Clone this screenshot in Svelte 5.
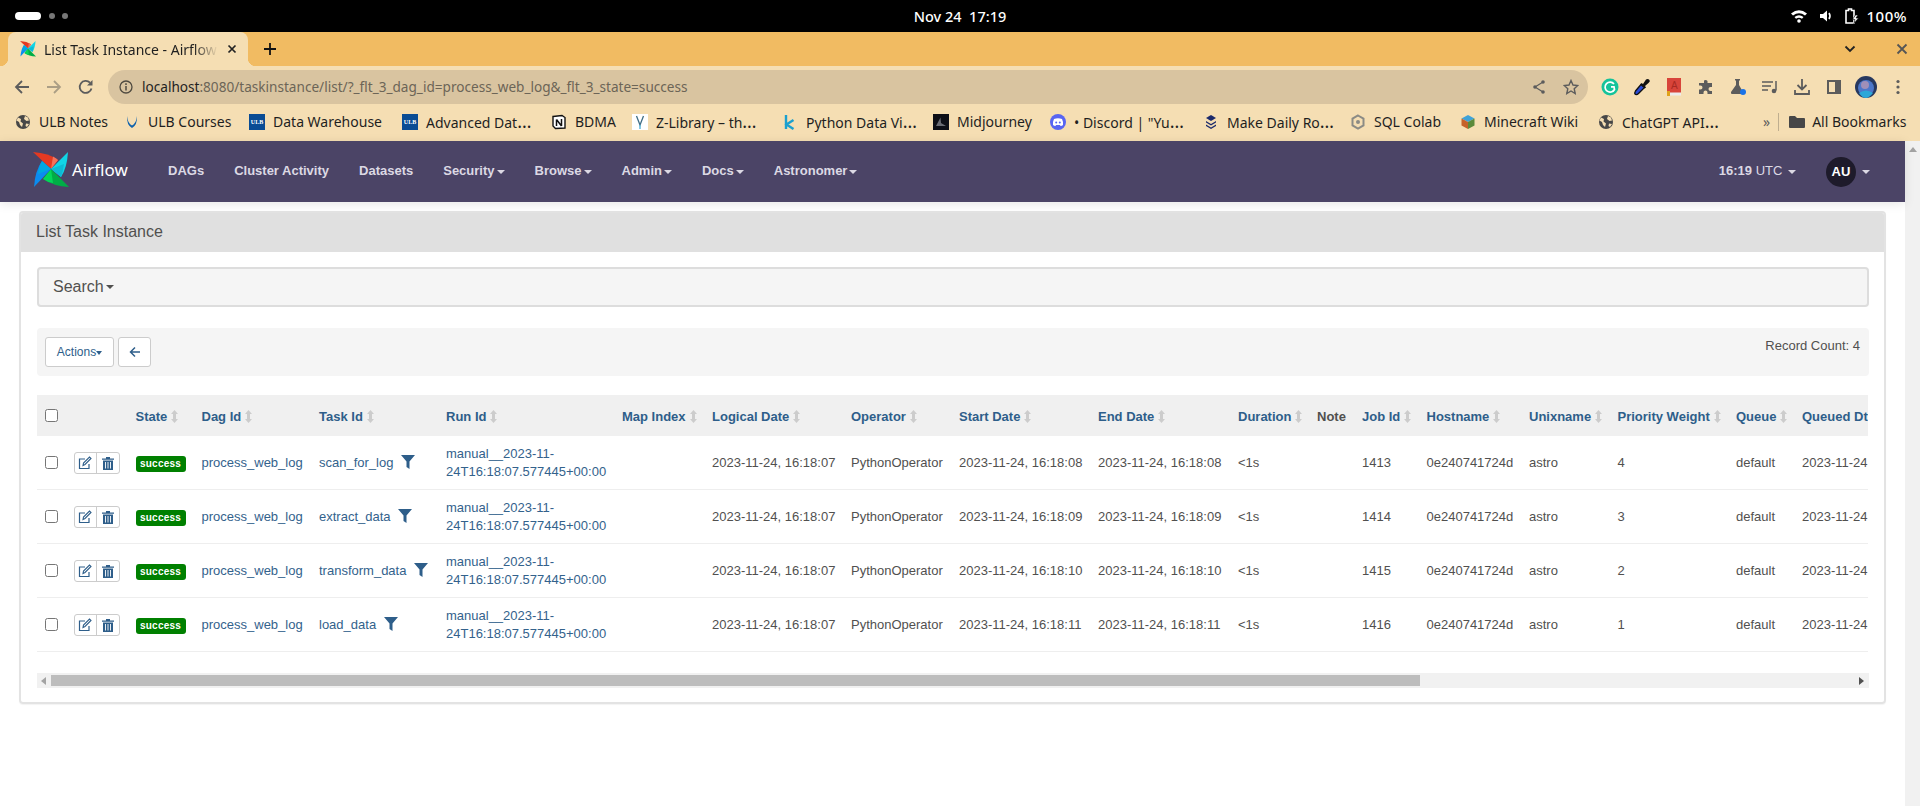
<script lang="ts">
	type Bookmark = { label: string; icon: string; width: number };

	// Widths are icon-to-icon distances, Chrome clips long titles at a fixed size.
	const bookmarks: Bookmark[] = [
		{ label: 'ULB Notes', icon: 'globe', width: 109 },
		{ label: 'ULB Courses', icon: 'ulbc', width: 125 },
		{ label: 'Data Warehouse', icon: 'ulb', width: 153 },
		{ label: 'Advanced Dat…', icon: 'ulb', width: 149 },
		{ label: 'BDMA', icon: 'notion', width: 81 },
		{ label: 'Z-Library – th…', icon: 'zlib', width: 150 },
		{ label: 'Python Data Vi…', icon: 'kaggle', width: 151 },
		{ label: 'Midjourney', icon: 'mj', width: 117 },
		{ label: '• Discord | "Yu…', icon: 'discord', width: 153 },
		{ label: 'Make Daily Ro…', icon: 'stack', width: 147 },
		{ label: 'SQL Colab', icon: 'colab', width: 110 },
		{ label: 'Minecraft Wiki', icon: 'cube', width: 138 },
		{ label: 'ChatGPT API…', icon: 'globe', width: 150 }
	];

	const navItems = [
		{ label: 'DAGs' },
		{ label: 'Cluster Activity' },
		{ label: 'Datasets' },
		{ label: 'Security', menu: true },
		{ label: 'Browse', menu: true },
		{ label: 'Admin', menu: true },
		{ label: 'Docs', menu: true },
		{ label: 'Astronomer', menu: true }
	];

	const columns = [
		{ label: '', width: 29.5 },
		{ label: '', width: 61 },
		{ label: 'State', width: 66, sort: true },
		{ label: 'Dag Id', width: 117.5, sort: true },
		{ label: 'Task Id', width: 127, sort: true },
		{ label: 'Run Id', width: 176, sort: true },
		{ label: 'Map Index', width: 90, sort: true },
		{ label: 'Logical Date', width: 139, sort: true },
		{ label: 'Operator', width: 108, sort: true },
		{ label: 'Start Date', width: 139, sort: true },
		{ label: 'End Date', width: 140, sort: true },
		{ label: 'Duration', width: 79, sort: true },
		{ label: 'Note', width: 45, plain: true },
		{ label: 'Job Id', width: 64.5, sort: true },
		{ label: 'Hostname', width: 102.5, sort: true },
		{ label: 'Unixname', width: 88.5, sort: true },
		{ label: 'Priority Weight', width: 118.5, sort: true },
		{ label: 'Queue', width: 66, sort: true },
		{ label: 'Queued Dttm', width: 160, sort: true }
	];

	const tableWidth = columns.reduce((sum, c) => sum + c.width, 0);

	const rows = [
		{ task: 'scan_for_log', start: '16:18:08', job: 1413, weight: 4 },
		{ task: 'extract_data', start: '16:18:09', job: 1414, weight: 3 },
		{ task: 'transform_data', start: '16:18:10', job: 1415, weight: 2 },
		{ task: 'load_data', start: '16:18:11', job: 1416, weight: 1 }
	];
</script>

{#snippet pinwheel(size: number)}
	<svg class="pinwheel" width={size} height={size} viewBox="0 0 36 36">
		<path d="M0 0 Q16 1 25 8 L18 17 Z" fill="#e43921" />
		<path d="M20 4.500 Q23 6 25 8 L18 17 Z" fill="#f4725b" />
		<path d="M35 0 Q34 16 28 25 L18 17 Z" fill="#11d5e6" />
		<path d="M31 12 Q30 20 28 25 L18 17 Z" fill="#0dbad4" />
		<path d="M36 35 Q20 34 10 27 L18 17 Z" fill="#00ad46" />
		<path d="M20 31 Q14 30 10 27 L18 17 Z" fill="#04d659" />
		<path d="M1 35 Q2 19 9 9 L18 17 Z" fill="#0b8cf0" />
		<path d="M5 22 Q6 14 9 9 L18 17 Z" fill="#00a7e1" />
	</svg>
{/snippet}

{#snippet bookmarkIcon(name: string)}
	{#if name === 'globe'}
		<svg width="16" height="16" viewBox="0 0 16 16"><circle cx="8" cy="8" r="7" fill="#474747" /><path d="M3 3.500 6 5 5.500 7.500 8 9.500 7 13 5 11 4 8 1.500 6.500ZM10 2l3 1.500 1 3-2.500.5L9 5ZM11 9.500l3 .5-2 3-1.500-1Z" fill="#f5deb3" /></svg>
	{:else if name === 'ulbc'}
		<svg width="16" height="16" viewBox="0 0 16 16"><path d="M3 2q-.5 9 5 12 5.500-3 5-12-1 8-5 9.500Q4 10 3 2Z" fill="#0f62ad" /></svg>
	{:else if name === 'ulb'}
		<span class="fav-ulb">ULB</span>
	{:else if name === 'notion'}
		<svg width="16" height="16" viewBox="0 0 16 16"><path d="M2 2.500 11 1.500l3 2V14l-9.500.5L2 12Z" fill="#fff" stroke="#111" stroke-width="1.400" /><path d="M5.500 5.500v6.500M5.500 5.500l5 6.500M10.500 5v7" stroke="#111" stroke-width="1.500" fill="none" /></svg>
	{:else if name === 'zlib'}
		<svg width="16" height="16" viewBox="0 0 16 16"><rect width="16" height="16" fill="#fff" /><path d="M4.500 2 8 11l3.500-9" stroke="#3f6d85" stroke-width="1.300" fill="none" /><path d="M8 11v4" stroke="#54b3d9" stroke-width="1.400" /></svg>
	{:else if name === 'kaggle'}
		<svg width="16" height="16" viewBox="0 0 16 16"><path d="M4 1v14M11.500 6 4.500 10.500 11.500 15" stroke="#1ba0cf" stroke-width="2.400" fill="none" /></svg>
	{:else if name === 'mj'}
		<svg width="16" height="16" viewBox="0 0 16 16"><rect width="16" height="16" fill="#0d0f17" /><path d="M3 12 7.500 3.500 8 9 13 12Z" fill="#6a6c74" /></svg>
	{:else if name === 'discord'}
		<svg width="16" height="16" viewBox="0 0 16 16"><circle cx="8" cy="8" r="8" fill="#5865f2" /><path d="M4 5q4-1.500 8 0 1.500 3 1 6-1 .8-2.500 1L10 11H6l-.5 1Q4 11.800 3 11q-.5-3 1-6Z" fill="#fff" /><circle cx="6.200" cy="8.500" r="1" fill="#5865f2" /><circle cx="9.800" cy="8.500" r="1" fill="#5865f2" /></svg>
	{:else if name === 'stack'}
		<svg width="16" height="16" viewBox="0 0 16 16"><path d="M8 1 13 4 8 7 3 4Z" fill="#1c2a6b" /><path d="M3 7 8 10l5-3v1.500L8 11.500 3 8.500ZM3 10.500 8 13.500l5-3V12L8 15 3 12Z" fill="#1c2a6b" /></svg>
	{:else if name === 'colab'}
		<svg width="16" height="16" viewBox="0 0 16 16"><path d="M8 1.500 13.500 4.700v6.600L8 14.500 2.500 11.300V4.700Z" fill="none" stroke="#8b8b85" stroke-width="2" /><circle cx="8" cy="8" r="2" fill="#8b8b85" /></svg>
	{:else if name === 'cube'}
		<svg width="16" height="16" viewBox="0 0 16 16"><path d="M8 1 14.500 4.500 8 8 1.500 4.500Z" fill="#3fa2d8" /><path d="M1.500 4.500 8 8v7L1.500 11.500Z" fill="#c5622a" /><path d="M14.500 4.500 8 8v7l6.500-3.500Z" fill="#5b8a3a" /></svg>
	{/if}
{/snippet}

{#snippet caret()}
	<span class="caret"></span>
{/snippet}

{#snippet sortIcon()}
	<svg class="sort" width="7" height="13" viewBox="0 0 7 13"><path d="M3.500 0 7 4H5V9H7L3.500 13 0 9H2V4H0Z" fill="#cccccc" /></svg>
{/snippet}

<div class="screen">
	<div class="gnome">
		<div class="activities"><span class="pill"></span><span class="dot"></span><span class="dot"></span></div>
		<div class="clock">Nov 24&nbsp;&nbsp;17:19</div>
		<div class="status">
			<svg width="18" height="14" viewBox="0 0 18 14"><path d="M1 4.500Q9-2 17 4.500L15 6.500Q9 2 3 6.500ZM4.500 8Q9 4.500 13.500 8L12 9.800Q9 7.800 6 9.800Z" fill="#fff" /><circle cx="9" cy="12" r="1.800" fill="#fff" /></svg>
			<svg width="14" height="14" viewBox="0 0 14 14"><path d="M1 5H4L8 1.500V12.500L4 9H1Z" fill="#fff" /><path d="M10 4Q12 7 10 10" stroke="#fff" stroke-width="1.600" fill="none" /></svg>
			<svg width="16" height="16" viewBox="0 0 16 16"><path d="M4.500 1h3v1.500H10V15H2V2.500h2.500Z" fill="none" stroke="#fff" stroke-width="1.600" /><path d="M11.500 7 8.500 11.500H11L10 15.500 14.500 10H12L14 7Z" fill="#fff" stroke="#000" stroke-width=".6" /></svg>
			<span>100%</span>
		</div>
	</div>

	<div class="tabstrip">
		<div class="tab">
			{@render pinwheel(16)}
			<span class="tab-title">List Task Instance - Airflow</span>
			<svg width="10" height="10" viewBox="0 0 10 10"><path d="M1.500 1.500 8.500 8.500M8.500 1.500 1.500 8.500" stroke="#222" stroke-width="1.700" /></svg>
		</div>
		<svg class="newtab" width="14" height="14" viewBox="0 0 14 14"><path d="M7 1V13M1 7H13" stroke="#111" stroke-width="1.800" /></svg>
		<svg class="tabs-menu" width="12" height="8" viewBox="0 0 12 8"><path d="M1.500 1.500 6 6l4.500-4.500" stroke="#222" stroke-width="1.800" fill="none" /></svg>
		<svg class="win-close" width="12" height="12" viewBox="0 0 12 12"><path d="M1.500 1.500 10.500 10.500M10.500 1.500 1.500 10.500" stroke="#555" stroke-width="1.800" /></svg>
	</div>

	<div class="toolbar">
		<svg class="nav-btn" width="16" height="16" viewBox="0 0 16 16"><path d="M15 8H2M8 2 2 8l6 6" stroke="#5c5c5c" stroke-width="1.800" fill="none" /></svg>
		<svg class="nav-btn" width="16" height="16" viewBox="0 0 16 16"><path d="M1 8H14M8 2l6 6-6 6" stroke="#ab9e85" stroke-width="1.800" fill="none" /></svg>
		<svg class="nav-btn" width="16" height="16" viewBox="0 0 16 16"><path d="M13.500 9.500A6 6 0 1 1 12 3.700" stroke="#5c5c5c" stroke-width="1.800" fill="none" /><path d="M14.500 1V6.500H9Z" fill="#5c5c5c" /></svg>
		<div class="omnibox">
			<svg width="14" height="14" viewBox="0 0 14 14"><circle cx="7" cy="7" r="6" fill="none" stroke="#4f4a40" stroke-width="1.300" /><path d="M7 6V10.500M7 3.300V5" stroke="#4f4a40" stroke-width="1.500" /></svg>
			<span class="url"><b>localhost</b>:8080/taskinstance/list/?_flt_3_dag_id=process_web_log&amp;_flt_3_state=success</span>
			<svg class="omni-end" width="14" height="16" viewBox="0 0 14 16"><circle cx="11" cy="3" r="1.800" fill="#5c5c5c" /><circle cx="3" cy="8" r="1.800" fill="#5c5c5c" /><circle cx="11" cy="13" r="1.800" fill="#5c5c5c" /><path d="M11 3 3 8l8 5" stroke="#5c5c5c" stroke-width="1.200" fill="none" /></svg>
			<svg width="16" height="16" viewBox="0 0 16 16"><path d="M8 1.500 10 6l4.800.5-3.600 3.200 1 4.800L8 12l-4.200 2.500 1-4.800L1.200 6.500 6 6Z" fill="none" stroke="#5c5c5c" stroke-width="1.400" /></svg>
		</div>
		<div class="extensions">
			<span class="ext"><svg width="18" height="18" viewBox="0 0 18 18"><circle cx="9" cy="9" r="8.500" fill="#15c39a" /><path d="M13 6A5 5 0 1 0 13.500 11.500L13 8.800H10" stroke="#fff" stroke-width="1.700" fill="none" /></svg></span>
			<span class="ext"><svg width="18" height="18" viewBox="0 0 18 18"><path d="M2.500 16.500Q1 15.500 2.500 13L8 6.500 11.500 9.500 5.500 15.500Q4 17 2.500 16.500Z" fill="#2b4bd6" stroke="#111" stroke-width="1.300" /><path d="M8.500 5 10 6 13 1.500Q15 .5 16.500 2 17.500 3.500 15.500 5L12 8 13 9.500 11.500 10.500 7.500 6.500Z" fill="#111" /></svg></span>
			<span class="ext"><svg width="16" height="18" viewBox="0 0 16 18"><rect x="1" y="0" width="14" height="15" fill="#d8443a" /><path d="M1 14.500H15V17.500H1Z" fill="#ececec" /><path d="M1 13 4 13V18H1Z" fill="#e0a21a" /><text x="5" y="11" font-size="10" fill="#a82a22" font-family="Liberation Sans, sans-serif">A</text></svg></span>
			<span class="ext"><svg width="16" height="16" viewBox="0 0 16 16"><path d="M6 1.500Q8 .5 9.500 2V4H14V8H12.500Q10.500 8 10.500 10T12.500 12H14V15H9.500V13.500Q9.500 11.500 7.500 11.500T5.500 13.500V15H1V10.500H2.500Q4.500 10.500 4.500 8.500T2.500 6.500H1V4H6Z" fill="#5c5c5c" /></svg></span>
			<span class="ext"><svg width="18" height="18" viewBox="0 0 18 18"><path d="M6 1H11V2.500H10V7L14 14Q14.500 16 13 16H3Q1.500 16 2 14L7 7V2.500H6Z" fill="#5c5c5c" /><circle cx="14" cy="14" r="3" fill="#1a73e8" /></svg></span>
			<span class="ext"><svg width="16" height="14" viewBox="0 0 16 14"><path d="M0 2H11M0 6H9M0 10H6" stroke="#5c5c5c" stroke-width="1.500" /><path d="M14 1V10.500" stroke="#5c5c5c" stroke-width="1.500" /><circle cx="12" cy="11" r="2.300" fill="#5c5c5c" /></svg></span>
			<span class="ext"><svg width="18" height="18" viewBox="0 0 18 18"><path d="M9 1V11M4.500 7 9 11.500 13.500 7M2 12V16H16V12" stroke="#5c5c5c" stroke-width="1.800" fill="none" /></svg></span>
			<span class="ext"><svg width="14" height="14" viewBox="0 0 14 14"><rect x="1" y="1" width="12" height="12" fill="none" stroke="#5c5c5c" stroke-width="2" /><rect x="8" y="1" width="5" height="12" fill="#5c5c5c" /></svg></span>
			<span class="ext"><svg width="22" height="22" viewBox="0 0 22 22"><circle cx="11" cy="11" r="11" fill="#27385f" /><circle cx="11" cy="12" r="8" fill="#4d77c9" /><circle cx="10" cy="9" r="4" fill="#a08fb8" /><path d="M4 17Q11 12 18 17 14 22 11 22 7 22 4 17Z" fill="#2ca7d8" /></svg></span>
			<span class="ext"><svg width="4" height="16" viewBox="0 0 4 16"><circle cx="2" cy="2.500" r="1.600" fill="#5c5c5c" /><circle cx="2" cy="8" r="1.600" fill="#5c5c5c" /><circle cx="2" cy="13.500" r="1.600" fill="#5c5c5c" /></svg></span>
		</div>
	</div>

	<div class="bookmarks">
		{#each bookmarks as b}
			<div class="bookmark" style:width="{b.width}px">
				<span class="bm-icon">{@render bookmarkIcon(b.icon)}</span>
				<span>{b.label.replace('…', '')}{#if b.label.endsWith('…')}<span class="ell">…</span>{/if}</span>
			</div>
		{/each}
		<span class="more">»</span>
		<span class="bm-sep"></span>
		<svg width="16" height="14" viewBox="0 0 16 14"><path d="M0 2Q0 1 1 1H6L8 3H15Q16 3 16 4V12Q16 13 15 13H1Q0 13 0 12Z" fill="#474747" /></svg>
		<span class="all-bm">All Bookmarks</span>
	</div>

	<div class="page">
		<main>
			<nav class="navbar">
				<a class="brand" href="#home">
					{@render pinwheel(36)}
					<span>Airflow</span>
				</a>
				<ul class="nav-list">
					{#each navItems as item}
						<li>{item.label}{#if item.menu}{@render caret()}{/if}</li>
					{/each}
				</ul>
				<div class="nav-right">
					<span class="utc"><b>16:19</b> UTC {@render caret()}</span>
					<span class="avatar">AU</span>
					{@render caret()}
				</div>
			</nav>

			<section class="panel">
				<div class="panel-heading">List Task Instance</div>
				<div class="panel-body">
					<div class="search">Search{@render caret()}</div>

					<div class="well">
						<div class="well-actions">
							<button class="btn" type="button">Actions{@render caret()}</button>
							<button class="btn back" type="button" aria-label="Back">
								<svg width="12" height="12" viewBox="0 0 12 12"><path d="M11 6H1.500M6 1.500 1.500 6 6 10.500" stroke="#2e5e8a" stroke-width="1.500" fill="none" /></svg>
							</button>
						</div>
						<span class="count">Record Count: 4</span>
					</div>

					<div class="table-wrap">
						<table style:width="{tableWidth}px">
							<colgroup>
								{#each columns as c}
									<col style:width="{c.width}px" />
								{/each}
							</colgroup>
							<thead>
								<tr>
									<th><input type="checkbox" aria-label="Select all" /></th>
									{#each columns.slice(1) as c}
										<th class:plain={c.plain}>{c.label}{#if c.sort}{@render sortIcon()}{/if}</th>
									{/each}
								</tr>
							</thead>
							<tbody>
								{#each rows as r}
									<tr>
										<td><input type="checkbox" aria-label="Select row" /></td>
										<td>
											<div class="btn-group">
												<span><svg width="14" height="14" viewBox="0 0 14 14"><path d="M11 8V12.500H1.500V3H7" stroke="#2e5e8a" stroke-width="1.200" fill="none" /><path d="M5 9.500 5.500 7 11.500 1 13 2.500 7 8.500Z" stroke="#2e5e8a" stroke-width="1.100" fill="none" /></svg></span>
												<span><svg width="12" height="14" viewBox="0 0 12 14"><path d="M0 2.500H12V3.800H0ZM4 1H8V2.500H4ZM1 4.500H11V14H1Z" fill="#2e5e8a" /><path d="M3.500 6V12.500M6 6V12.500M8.500 6V12.500" stroke="#fff" stroke-width=".9" /></svg></span>
											</div>
										</td>
										<td><span class="badge">success</span></td>
										<td><a href="#dag">process_web_log</a></td>
										<td>
											<a href="#task">{r.task}</a>
											<svg class="funnel" width="14" height="14" viewBox="0 0 14 14"><path d="M0 0H14L8.500 6.500V14L5.500 12V6.500Z" fill="#2e5e8a" /></svg>
										</td>
										<td><a href="#run">manual__2023-11-<br />24T16:18:07.577445+00:00</a></td>
										<td></td>
										<td>2023-11-24, 16:18:07</td>
										<td>PythonOperator</td>
										<td>2023-11-24, {r.start}</td>
										<td>2023-11-24, {r.start}</td>
										<td>&lt;1s</td>
										<td></td>
										<td>{r.job}</td>
										<td>0e240741724d</td>
										<td>astro</td>
										<td>{r.weight}</td>
										<td>default</td>
										<td>2023-11-24, 16:18:07</td>
									</tr>
								{/each}
							</tbody>
						</table>
					</div>

					<div class="hscroll">
						<span class="arrow left"></span>
						<span class="thumb"></span>
						<span class="arrow right"></span>
					</div>
				</div>
			</section>
		</main>
		<aside class="vscroll"><span class="arrow up"></span></aside>
	</div>
</div>

<style>
	:global(body) {
		margin: 0;
		background: #fff;
	}
	.screen {
		height: 806px;
		overflow: hidden;
		display: flex;
		flex-direction: column;
		font-family: 'Liberation Sans', Arial, sans-serif;
		font-size: 13px;
		color: #51504f;
	}
	svg {
		flex: none;
		display: block;
	}

	/* desktop top bar */
	.gnome {
		height: 32px;
		flex: none;
		background: #000;
		color: #fff;
		display: grid;
		grid-template-columns: 1fr auto 1fr;
		align-items: center;
		font-family: 'Noto Sans', sans-serif;
		font-size: 14.500px;
		font-weight: 500;
	}
	.activities {
		display: flex;
		align-items: center;
		gap: 5px;
		padding-left: 15px;
	}
	.pill {
		width: 26px;
		height: 8px;
		border-radius: 4px;
		background: #fff;
		margin-right: 1px;
	}
	.dot {
		width: 6px;
		height: 6px;
		border-radius: 50%;
		background: #777;
		margin-left: 2px;
	}
	.status {
		display: flex;
		justify-content: flex-end;
		align-items: center;
		gap: 11px;
		padding-right: 13px;
	}
	.status span {
		margin-left: -5px;
		font-size: 15px;
		letter-spacing: 0.5px;
	}

	/* browser chrome */
	.tabstrip {
		height: 34px;
		flex: none;
		background: #f1bb62;
		display: flex;
		align-items: center;
		padding-left: 8px;
	}
	.tab {
		width: 240px;
		height: 34px;
		box-sizing: border-box;
		background: #f5deb3;
		border-radius: 8px 8px 0 0;
		display: flex;
		align-items: center;
		gap: 8px;
		padding: 0 11px 0 12px;
		color: #1f1f1f;
		font-family: 'Noto Sans', sans-serif;
		font-size: 14px;
		position: relative;
	}
	/* the flared feet of the active tab */
	.tab::before,
	.tab::after {
		content: '';
		position: absolute;
		bottom: 0;
		width: 8px;
		height: 8px;
	}
	.tab::before {
		left: -8px;
		background: radial-gradient(circle at 0 0, transparent 8px, #f5deb3 8.500px);
	}
	.tab::after {
		right: -8px;
		background: radial-gradient(circle at 100% 0, transparent 8px, #f5deb3 8.500px);
	}
	.tab-title {
		width: 174px;
		flex: none;
		white-space: nowrap;
		overflow: hidden;
		-webkit-mask-image: linear-gradient(to right, #000 86%, transparent);
		mask-image: linear-gradient(to right, #000 86%, transparent);
	}
	.tab svg:last-child {
		margin-left: 1px;
	}
	.newtab {
		margin-left: 15px;
	}
	.tabs-menu {
		margin-left: auto;
		margin-right: 40px;
	}
	.win-close {
		margin-right: 12px;
	}
	.toolbar {
		height: 38px;
		flex: none;
		box-sizing: border-box;
		background: #f5deb3;
		display: flex;
		align-items: center;
		padding: 4px 0 0 14px;
		gap: 16px;
	}
	.omnibox {
		margin-left: -2px;
		width: 1480px;
		height: 34px;
		box-sizing: border-box;
		border-radius: 17px;
		background: #d9c4a0;
		display: flex;
		align-items: center;
		padding: 0 9px 0 11px;
		gap: 17px;
		flex: none;
		color: #6c6557;
		font-family: 'Noto Sans', sans-serif;
		font-size: 13.600px;
	}
	.url {
		flex: 1;
		margin-left: -8px;
		padding-bottom: 2px;
		white-space: nowrap;
	}
	.url b {
		font-weight: 400;
		color: #1f1f1f;
	}
	.extensions {
		display: flex;
		margin-left: -10px;
		flex: none;
	}
	.ext {
		width: 32px;
		height: 32px;
		flex: none;
		display: flex;
		align-items: center;
		justify-content: center;
	}
	.bookmarks {
		height: 37px;
		flex: none;
		box-sizing: border-box;
		padding: 0 0 2px 15px;
		background: #f5deb3;
		display: flex;
		align-items: center;
		font-family: 'Noto Sans', sans-serif;
		font-size: 14px;
		color: #1f1f1f;
		white-space: nowrap;
	}
	.bookmark {
		display: flex;
		align-items: center;
		gap: 8px;
		flex: none;
		box-sizing: border-box;
	}
	.ell {
		font-size: 18px;
		line-height: 1;
	}
	.bm-icon {
		width: 16px;
		height: 16px;
		flex: none;
	}
	.fav-ulb {
		display: block;
		width: 16px;
		height: 16px;
		background: #0a4c94;
		color: #fff;
		font: bold 6px/16px 'Liberation Serif', serif;
		text-align: center;
	}
	.more {
		margin-left: 15px;
		color: #5c5c5c;
		font-size: 14px;
	}
	.bm-sep {
		width: 1px;
		height: 18px;
		background: #bfae8f;
		margin: 0 10px 0 8px;
	}
	.all-bm {
		margin-left: 7px;
	}

	/* page */
	.page {
		flex: 1;
		display: flex;
		min-height: 0;
	}
	main {
		flex: 1;
		min-width: 0;
	}
	.navbar {
		height: 61px;
		background: #4b4466;
		color: #dcd9e4;
		display: flex;
		align-items: center;
		font-weight: bold;
		box-shadow: 0 2px 10px rgba(0, 0, 0, 0.1);
		position: relative;
		padding-left: 33px;
	}
	.brand {
		display: flex;
		align-items: center;
		gap: 3px;
		margin-top: -4px;
		color: #fff;
		text-decoration: none;
		font-family: 'Noto Sans', sans-serif;
		font-weight: 400;
		font-size: 17px;
		width: 135px;
	}
	.nav-list {
		list-style: none;
		display: flex;
		gap: 30px;
		margin: -2px 0 0;
		padding: 0;
	}
	.caret {
		display: inline-block;
		width: 0;
		height: 0;
		margin-left: 2px;
		vertical-align: middle;
		border-top: 4px solid;
		border-left: 4px solid transparent;
		border-right: 4px solid transparent;
	}
	.nav-right {
		margin-left: auto;
		display: flex;
		align-items: center;
		padding-right: 35px;
	}
	.utc {
		font-weight: 400;
		margin: -2px 30px 0 0;
	}
	.utc b {
		font-weight: bold;
	}
	.avatar {
		width: 30px;
		height: 30px;
		border-radius: 50%;
		background: #1e1b2b;
		color: #fff;
		display: flex;
		align-items: center;
		justify-content: center;
		margin-right: 4px;
	}

	.panel {
		margin: 9px 19px 0;
		border: 2px solid #e3e3e3;
		border-radius: 4px;
		box-shadow: 0 1px 1px rgba(0, 0, 0, 0.05);
	}
	.panel-heading {
		height: 39px;
		box-sizing: border-box;
		padding: 0 0 2px 15px;
		background: #e0e0e0;
		border-radius: 2px 2px 0 0;
		display: flex;
		align-items: center;
		font-size: 16px;
	}
	.panel-body {
		padding: 15px 15px 14px 16px;
	}
	.search {
		height: 40px;
		box-sizing: border-box;
		border: 2px solid #ddd;
		border-radius: 4px;
		background: #f5f5f5;
		padding-left: 14px;
		display: flex;
		align-items: center;
		font-size: 16px;
	}
	.well {
		margin-top: 21px;
		height: 48px;
		background: #f5f5f5;
		border-radius: 4px;
		display: flex;
		justify-content: space-between;
		padding: 9px 9px 0 8px;
		box-sizing: border-box;
	}
	.well-actions {
		display: flex;
		gap: 4px;
		align-items: flex-start;
	}
	.btn {
		height: 30px;
		box-sizing: border-box;
		width: 69px;
		border: 1px solid #ccc;
		border-radius: 3px;
		background: #fff;
		color: #2e5e8a;
		font: 12px 'Liberation Sans', Arial, sans-serif;
		padding: 0;
	}
	.btn .caret {
		margin-left: 0;
		border-left-width: 3.500px;
		border-right-width: 3.500px;
	}
	.back {
		width: 33px;
		display: flex;
		align-items: center;
		justify-content: center;
	}
	.count {
		margin-top: 1px;
	}

	.table-wrap {
		margin: 19px 1px 0 0;
		overflow: hidden;
	}
	table {
		border-collapse: separate;
		border-spacing: 0;
		table-layout: fixed;
		line-height: 18px;
	}
	thead tr {
		background: #f0f0f0;
	}
	th {
		height: 41px;
		box-sizing: border-box;
		padding: 2px 8px 0;
		text-align: left;
		color: #2e5e8a;
		white-space: nowrap;
		overflow: hidden;
	}
	th.plain {
		color: #51504f;
	}
	td {
		height: 54px;
		box-sizing: border-box;
		padding: 8px;
		border-bottom: 1px solid #eee;
		white-space: nowrap;
		overflow: hidden;
	}
	input[type='checkbox'] {
		display: block;
		margin: 0;
		width: 13px;
		height: 13px;
	}
	th input[type='checkbox'] {
		margin-top: -3px;
	}
	td a {
		color: #33628c;
		text-decoration: none;
	}
	.sort {
		display: inline-block;
		margin-left: 4px;
		vertical-align: -2px;
	}
	.btn-group {
		display: flex;
		width: 46px;
		height: 22px;
		margin-left: -1px;
		box-sizing: border-box;
		border: 1px solid #ccc;
		border-radius: 3px;
	}
	.btn-group span {
		flex: 1;
		display: flex;
		align-items: center;
		justify-content: center;
	}
	.btn-group span + span {
		border-left: 1px solid #ccc;
	}
	.badge {
		display: inline-block;
		width: 50px;
		height: 16px;
		background: #008000;
		border-radius: 3px;
		color: #fff;
		font-size: 10px;
		font-weight: bold;
		line-height: 16px;
		text-align: center;
		letter-spacing: 0.2px;
	}
	.funnel {
		display: inline-block;
		margin-left: 4px;
		vertical-align: -2px;
	}

	.hscroll {
		margin-top: 21px;
		height: 15px;
		background: #f1f1f1;
		display: flex;
		align-items: center;
	}
	.thumb {
		width: 1369px;
		height: 11px;
		background: #bdbdbd;
	}
	.arrow {
		width: 0;
		height: 0;
		border: 4px solid transparent;
	}
	.arrow.left {
		border-left-width: 0;
		border-right: 5px solid #a3a3a3;
		margin: 0 5px 0 4px;
	}
	.arrow.right {
		border-right-width: 0;
		border-left: 5px solid #505050;
		margin-left: auto;
		margin-right: 5px;
	}
	.vscroll {
		width: 15px;
		flex: none;
		background: #f1f1f1;
		display: flex;
		justify-content: center;
		align-items: flex-start;
		padding-top: 6px;
		box-sizing: border-box;
	}
	.arrow.up {
		border-top-width: 0;
		border-bottom: 5px solid #a3a3a3;
	}
</style>
